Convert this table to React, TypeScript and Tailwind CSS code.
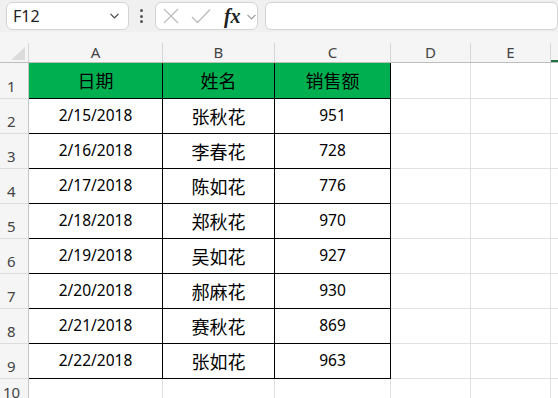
import React from 'react';

const rows = [
  { n: 2, date: '2/15/2018', name: '张秋花', amount: 951 },
  { n: 3, date: '2/16/2018', name: '李春花', amount: 728 },
  { n: 4, date: '2/17/2018', name: '陈如花', amount: 776 },
  { n: 5, date: '2/18/2018', name: '郑秋花', amount: 970 },
  { n: 6, date: '2/19/2018', name: '吴如花', amount: 927 },
  { n: 7, date: '2/20/2018', name: '郝麻花', amount: 930 },
  { n: 8, date: '2/21/2018', name: '赛秋花', amount: 869 },
  { n: 9, date: '2/22/2018', name: '张如花', amount: 963 },
];

const sans = { fontFamily: '"Noto Sans", "Noto Sans CJK SC", sans-serif' };
const cjk = '[font-family:"Noto_Sans_CJK_SC",sans-serif]';

const Chevron = ({ color }: { color: string }) => (
  <svg width="9" height="6" viewBox="0 0 9 6" fill="none">
    <polyline points="0.5,0.8 4.5,4.8 8.5,0.8" stroke={color} strokeWidth="1.2" />
  </svg>
);

const RowHead = ({ n }: { n: number }) => (
  <div className="w-[29px] shrink-0 flex items-end pl-[7px] pb-[4px] bg-[#f5f5f5] border-r border-r-[#c6c6c6] border-b border-b-[#dcdcdc] text-[15px] leading-none text-[#444]">
    {n}
  </div>
);

const Toolbar = () => (
  <div className="h-[32px] bg-[#f0f0f0] flex items-start pt-[2px]">
    <div className="ml-[6px] w-[125px] h-[28px] bg-white border border-[#d3d3d3] rounded-[6px] flex items-center justify-between pl-[6px] pr-[9px]">
      <span className="text-[16px] text-[#222]">F12</span>
      <Chevron color="#444" />
    </div>
    <div className="w-[27px] h-[28px] flex flex-col items-center justify-center gap-[2.5px]">
      <span className="w-[3px] h-[3px] rounded-full bg-[#555]" />
      <span className="w-[3px] h-[3px] rounded-full bg-[#555]" />
      <span className="w-[3px] h-[3px] rounded-full bg-[#555]" />
    </div>
    <div className="w-[105px] h-[28px] bg-white border border-[#d3d3d3] rounded-[6px] flex items-center pl-[7px]">
      <svg width="16" height="16" viewBox="0 0 16 16" fill="none">
        <line x1="1" y1="1" x2="15" y2="15" stroke="#bcbcbc" strokeWidth="1.3" />
        <line x1="15" y1="1" x2="1" y2="15" stroke="#bcbcbc" strokeWidth="1.3" />
      </svg>
      <svg className="ml-[12px]" width="20" height="16" viewBox="0 0 20 16" fill="none">
        <polyline points="1,9 6.5,14.5 19,1.5" stroke="#bcbcbc" strokeWidth="1.3" />
      </svg>
      <span className="ml-[13px] text-[20px] italic font-bold leading-none text-[#222] [font-family:'Liberation_Serif',serif]">
        fx
      </span>
      <span className="ml-[6px] mt-[1px]">
        <Chevron color="#9a9a9a" />
      </span>
    </div>
    <div className="ml-[7px] w-[300px] h-[28px] bg-white border border-[#d3d3d3] rounded-[6px]" />
  </div>
);

const colHeads = [
  { l: 'A', w: 'w-[134px]' },
  { l: 'B', w: 'w-[112px]' },
  { l: 'C', w: 'w-[116px]' },
  { l: 'D', w: 'w-[80px]' },
  { l: 'E', w: 'w-[80px]' },
];

export default function App() {
  return (
    <div className="w-[558px] h-[398px] overflow-hidden bg-white" style={sans}>
      <Toolbar />
      <div className="h-[11px] bg-[#f5f5f5]" />

      {/* column header row */}
      <div className="flex h-[20px] bg-[#f5f5f5] border-b border-b-[#bdbdbd]">
        <div className="w-[29px] shrink-0 border-r border-r-[#d6d6d6] flex items-end justify-end pr-[3px] pb-[2px]">
          <svg width="14" height="13" viewBox="0 0 14 13">
            <polygon points="14,0 14,13 0,13" fill="#dcdcdc" />
          </svg>
        </div>
        {colHeads.map((c) => (
          <div
            key={c.l}
            className={`${c.w} shrink-0 border-r border-r-[#d6d6d6] flex items-center justify-center text-[15px] leading-none text-[#444]`}
          >
            {c.l}
          </div>
        ))}
        <div className="flex-1 border-b-2 border-b-[#217346]" />
      </div>

      {/* row 1: header */}
      <div className="flex h-[36px]">
        <RowHead n={1} />
        <div className={`w-[134px] shrink-0 bg-[#00b050] border-r border-b border-black flex items-center justify-center text-[18px] ${cjk}`}>
          日期
        </div>
        <div className={`w-[112px] shrink-0 bg-[#00b050] border-r border-b border-black flex items-center justify-center text-[18px] ${cjk}`}>
          姓名
        </div>
        <div className={`w-[116px] shrink-0 bg-[#00b050] border-r border-b border-black flex items-center justify-center text-[18px] ${cjk}`}>
          销售额
        </div>
        <div className="w-[80px] shrink-0 border-r border-b border-[#e1e1e1]" />
        <div className="w-[80px] shrink-0 border-r border-b border-[#e1e1e1]" />
        <div className="flex-1 border-b border-[#e1e1e1]" />
      </div>

      {rows.map((r) => (
        <div key={r.n} className="flex h-[35px]">
          <RowHead n={r.n} />
          <div className="w-[134px] shrink-0 border-r border-b border-black flex items-center justify-center text-[15.5px] leading-none text-black">
            {r.date}
          </div>
          <div className={`w-[112px] shrink-0 border-r border-b border-black flex items-center justify-center text-[18px] text-black ${cjk}`}>
            {r.name}
          </div>
          <div className="w-[116px] shrink-0 border-r border-b border-black flex items-center justify-center text-[15.5px] leading-none text-black">
            {r.amount}
          </div>
          <div className="w-[80px] shrink-0 border-r border-b border-[#e1e1e1]" />
          <div className="w-[80px] shrink-0 border-r border-b border-[#e1e1e1]" />
          <div className="flex-1 border-b border-[#e1e1e1]" />
        </div>
      ))}

      {/* row 10 */}
      <div className="flex h-[35px]">
        <div className="w-[29px] shrink-0 flex items-start pl-[3px] pt-[6px] bg-[#f5f5f5] border-r border-r-[#c6c6c6] text-[15px] leading-none text-[#444]">
          10
        </div>
        <div className="w-[134px] shrink-0 border-r border-[#e1e1e1]" />
        <div className="w-[112px] shrink-0 border-r border-[#e1e1e1]" />
        <div className="w-[116px] shrink-0 border-r border-[#e1e1e1]" />
        <div className="w-[80px] shrink-0 border-r border-[#e1e1e1]" />
        <div className="w-[80px] shrink-0 border-r border-[#e1e1e1]" />
        <div className="flex-1" />
      </div>
    </div>
  );
}
